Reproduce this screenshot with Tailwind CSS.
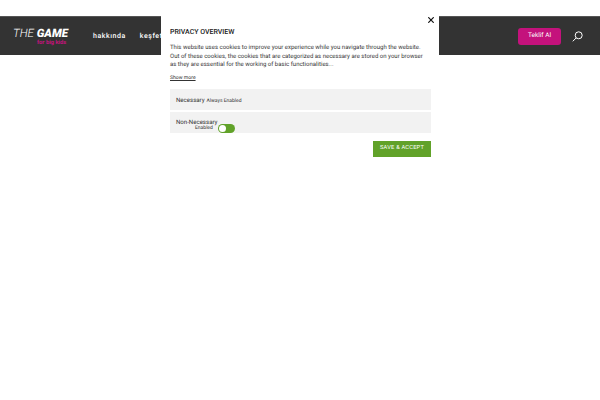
<!DOCTYPE html>
<html><head><meta charset="utf-8"><script src="https://cdn.jsdelivr.net/npm/@tailwindcss/browser@4"></script></head>
<body class="relative w-[600px] h-[400px] overflow-hidden bg-white font-['Roboto',sans-serif] [text-rendering:geometricPrecision]">
<div class="mt-4 h-[39px] bg-[#333333] border-t border-[#555] flex items-center">
  <div class="ml-[13px] w-[56px] flex flex-col items-start">
    <div class="text-[11.5px] leading-[12px] italic text-white whitespace-nowrap"><span class="font-light">THE</span> <span class="font-black">GAME</span></div>
    <div class="ml-[24px] mt-[1px] text-[5.8px] leading-[6px] font-bold text-[#c4127c] whitespace-nowrap">for big kids</div>
  </div>
  <span class="ml-[24px] text-[7px] font-medium tracking-[0.55px] text-white">hakkında</span>
  <span class="ml-[14px] text-[7px] font-medium tracking-[0.55px] text-white">keşfet</span>
  <div class="ml-auto w-[43px] h-[17px] rounded-[3px] bg-[#c4127c] text-white text-[6.5px] flex items-center justify-center">Teklif Al</div>
  <svg class="ml-[11px] mr-[17px]" width="11" height="11" viewBox="0 0 11 11" fill="none" stroke="#fff" stroke-width="1"><circle cx="6.7" cy="4.3" r="3.5"/><path d="M4.2 6.9 L0.8 10.3"/></svg>
</div>
<div class="absolute left-[161px] top-[11px] w-[278px] h-[147px] bg-white pl-[9px] pr-[8px]">
  <svg class="absolute right-[5px] top-[6px]" width="6" height="6" viewBox="0 0 6 6" stroke="#111" stroke-width="1.2"><path d="M0.3 0.3 L5.7 5.7 M5.7 0.3 L0.3 5.7"/></svg>
  <h2 class="pt-[15px] text-[7px] leading-[13px] font-medium text-[#222] whitespace-nowrap">PRIVACY OVERVIEW</h2>
  <p class="mt-[5px] text-[6.03px] leading-[8.5px] text-[#333] whitespace-nowrap">This website uses cookies to improve your experience while you navigate through the website.<br>Out of these cookies, the cookies that are categorized as necessary are stored on your browser<br>as they are essential for the working of basic functionalities...</p>
  <div class="mt-[4px] text-[5.1px] leading-[8px] text-[#333] underline">Show more</div>
  <div class="mt-[7px] h-[21px] bg-[#f2f2f2] px-[6px] pt-[3px] flex items-baseline text-[6.1px] leading-[18px] text-[#333] whitespace-nowrap"><span>Necessary</span><span class="ml-[2px] text-[5px]">Always Enabled</span></div>
  <div class="mt-[2px] h-[21px] bg-[#f2f2f2] px-[6px] pt-[7px] text-[6.1px] leading-[8px] text-[#333] relative whitespace-nowrap">Non-Necessary
    <span class="absolute left-[25px] top-[13px] text-[5px] leading-[6px]">Enabled</span>
    <span class="absolute left-[48px] top-[12px] w-[17px] h-[9px] rounded-full bg-[#61a229] flex items-center pl-[1px]"><span class="w-[7px] h-[7px] rounded-full bg-white"></span></span>
  </div>
  <div class="mt-[8px] flex justify-end"><div class="w-[58px] h-[16px] bg-[#61a229] text-white text-[5.7px] tracking-[0.2px] flex items-center justify-center">SAVE &amp; ACCEPT</div></div>
</div>
</body></html>
